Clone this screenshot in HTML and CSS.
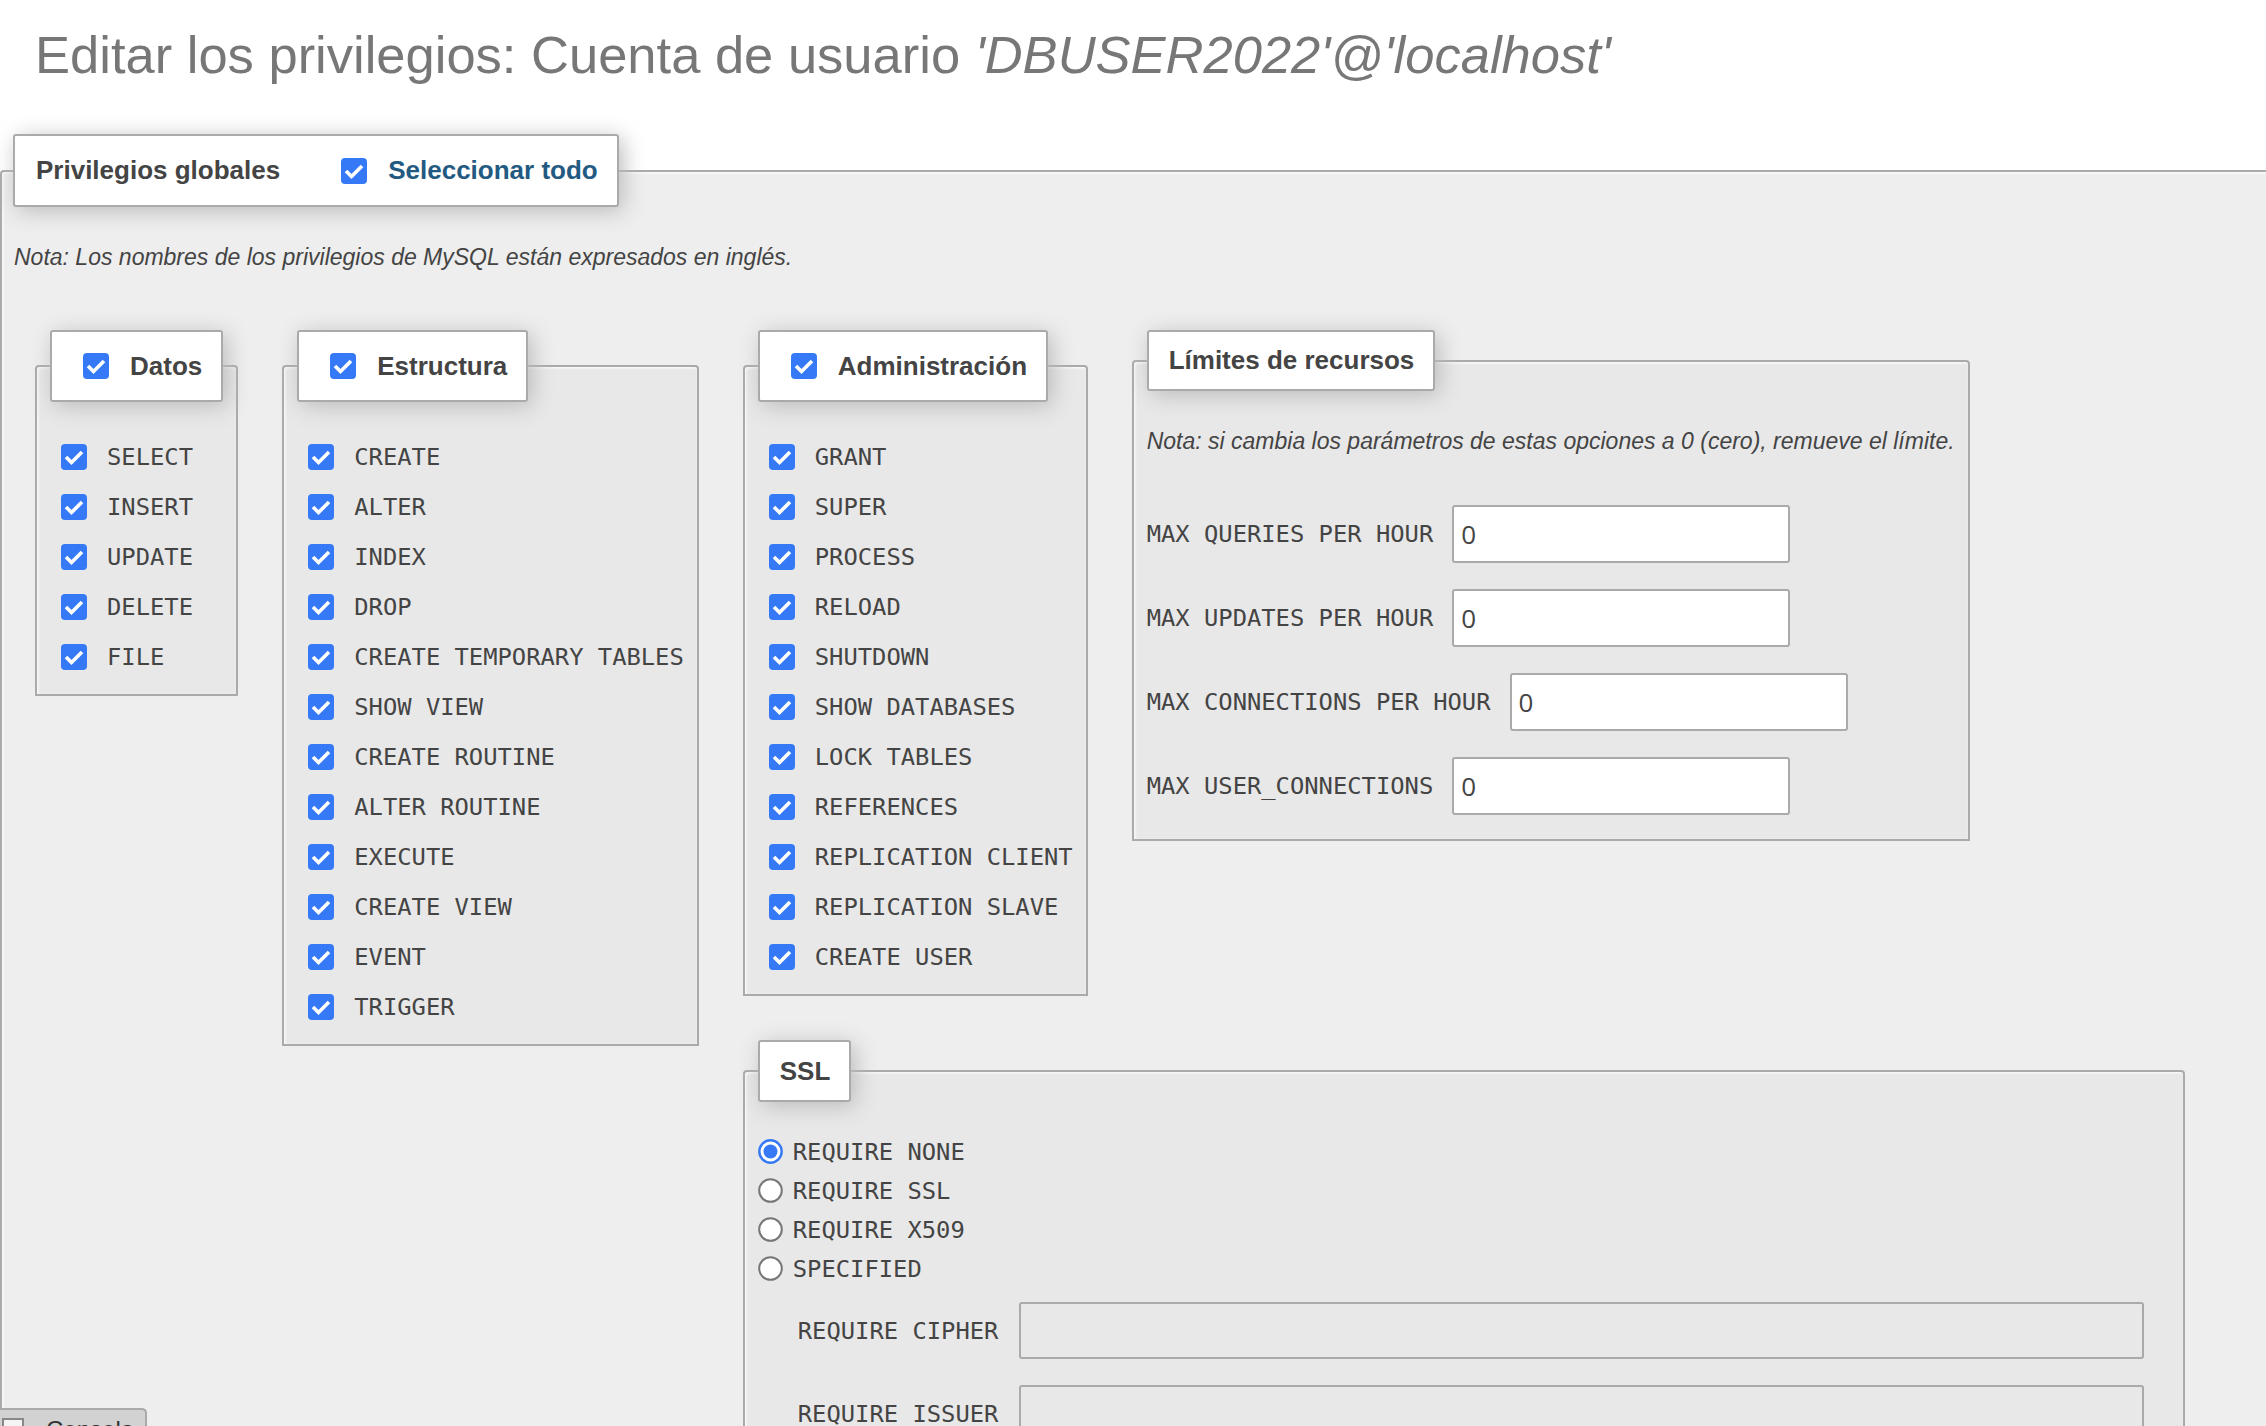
FILE: index.html
```html
<!DOCTYPE html>
<html lang="es">
<head>
<meta charset="utf-8">
<title>Editar los privilegios</title>
<link rel="stylesheet" href="styles.css">
</head>
<body>
<svg class="sprite" aria-hidden="true">
  <symbol id="i-check" viewBox="0 0 26 26">
    <rect x="0" y="0" width="26" height="26" rx="4" fill="#3579f6"/>
    <path d="M5 13 L10.5 18.5 L21 8" fill="none" stroke="#fff" stroke-width="3.6"/>
  </symbol>
  <symbol id="i-radio-on" viewBox="0 0 25 25">
    <circle cx="12.5" cy="12.5" r="11.2" fill="#fff" stroke="#3579f6" stroke-width="2.4"/>
    <circle cx="12.5" cy="12.5" r="7" fill="#3579f6"/>
  </symbol>
  <symbol id="i-radio-off" viewBox="0 0 25 25">
    <circle cx="12.5" cy="12.5" r="11.3" fill="#fff" stroke="#767676" stroke-width="2"/>
  </symbol>
</svg>

<h2 class="page-title">Editar los privilegios: Cuenta de usuario <span class="who">'DBUSER2022'@'localhost'</span></h2>

<fieldset class="outer">
  <legend class="lg lg-global"><div class="lg-in">
    <span>Privilegios globales</span>
    <svg class="cb"><use href="#i-check"/></svg>
    <span class="select-all">Seleccionar todo</span>
  </div></legend>

  <p class="note">Nota: Los nombres de los privilegios de MySQL están expresados en inglés.</p>

  <div class="groups">
    <fieldset class="grp">
      <legend class="lg"><div class="lg-in with-cb"><svg class="cb"><use href="#i-check"/></svg><span>Datos</span></div></legend>
      <div class="items">
        <div class="item"><svg class="cb"><use href="#i-check"/></svg><span>SELECT</span></div>
        <div class="item"><svg class="cb"><use href="#i-check"/></svg><span>INSERT</span></div>
        <div class="item"><svg class="cb"><use href="#i-check"/></svg><span>UPDATE</span></div>
        <div class="item"><svg class="cb"><use href="#i-check"/></svg><span>DELETE</span></div>
        <div class="item"><svg class="cb"><use href="#i-check"/></svg><span>FILE</span></div>
      </div>
    </fieldset>

    <fieldset class="grp">
      <legend class="lg"><div class="lg-in with-cb"><svg class="cb"><use href="#i-check"/></svg><span>Estructura</span></div></legend>
      <div class="items">
        <div class="item"><svg class="cb"><use href="#i-check"/></svg><span>CREATE</span></div>
        <div class="item"><svg class="cb"><use href="#i-check"/></svg><span>ALTER</span></div>
        <div class="item"><svg class="cb"><use href="#i-check"/></svg><span>INDEX</span></div>
        <div class="item"><svg class="cb"><use href="#i-check"/></svg><span>DROP</span></div>
        <div class="item"><svg class="cb"><use href="#i-check"/></svg><span>CREATE TEMPORARY TABLES</span></div>
        <div class="item"><svg class="cb"><use href="#i-check"/></svg><span>SHOW VIEW</span></div>
        <div class="item"><svg class="cb"><use href="#i-check"/></svg><span>CREATE ROUTINE</span></div>
        <div class="item"><svg class="cb"><use href="#i-check"/></svg><span>ALTER ROUTINE</span></div>
        <div class="item"><svg class="cb"><use href="#i-check"/></svg><span>EXECUTE</span></div>
        <div class="item"><svg class="cb"><use href="#i-check"/></svg><span>CREATE VIEW</span></div>
        <div class="item"><svg class="cb"><use href="#i-check"/></svg><span>EVENT</span></div>
        <div class="item"><svg class="cb"><use href="#i-check"/></svg><span>TRIGGER</span></div>
      </div>
    </fieldset>

    <div class="right-col">
      <div class="right-top">
        <fieldset class="grp">
          <legend class="lg"><div class="lg-in with-cb"><svg class="cb"><use href="#i-check"/></svg><span>Administración</span></div></legend>
          <div class="items">
            <div class="item"><svg class="cb"><use href="#i-check"/></svg><span>GRANT</span></div>
            <div class="item"><svg class="cb"><use href="#i-check"/></svg><span>SUPER</span></div>
            <div class="item"><svg class="cb"><use href="#i-check"/></svg><span>PROCESS</span></div>
            <div class="item"><svg class="cb"><use href="#i-check"/></svg><span>RELOAD</span></div>
            <div class="item"><svg class="cb"><use href="#i-check"/></svg><span>SHUTDOWN</span></div>
            <div class="item"><svg class="cb"><use href="#i-check"/></svg><span>SHOW DATABASES</span></div>
            <div class="item"><svg class="cb"><use href="#i-check"/></svg><span>LOCK TABLES</span></div>
            <div class="item"><svg class="cb"><use href="#i-check"/></svg><span>REFERENCES</span></div>
            <div class="item"><svg class="cb"><use href="#i-check"/></svg><span>REPLICATION CLIENT</span></div>
            <div class="item"><svg class="cb"><use href="#i-check"/></svg><span>REPLICATION SLAVE</span></div>
            <div class="item"><svg class="cb"><use href="#i-check"/></svg><span>CREATE USER</span></div>
          </div>
        </fieldset>

        <fieldset class="grp limits">
          <legend class="lg"><div class="lg-in"><span>Límites de recursos</span></div></legend>
          <p class="note">Nota: si cambia los parámetros de estas opciones a 0 (cero), remueve el límite.</p>
          <div class="limit-rows">
            <div class="limit-row"><label>MAX QUERIES PER HOUR</label><input class="txt" type="text" value="0"></div>
            <div class="limit-row"><label>MAX UPDATES PER HOUR</label><input class="txt" type="text" value="0"></div>
            <div class="limit-row"><label>MAX CONNECTIONS PER HOUR</label><input class="txt" type="text" value="0"></div>
            <div class="limit-row"><label>MAX USER_CONNECTIONS</label><input class="txt" type="text" value="0"></div>
          </div>
        </fieldset>
      </div>

      <fieldset class="grp ssl">
        <legend class="lg"><div class="lg-in ssl-in"><span>SSL</span></div></legend>
        <div class="radios">
          <div class="radio-row"><svg class="rd"><use href="#i-radio-on"/></svg><span>REQUIRE NONE</span></div>
          <div class="radio-row"><svg class="rd"><use href="#i-radio-off"/></svg><span>REQUIRE SSL</span></div>
          <div class="radio-row"><svg class="rd"><use href="#i-radio-off"/></svg><span>REQUIRE X509</span></div>
          <div class="radio-row"><svg class="rd"><use href="#i-radio-off"/></svg><span>SPECIFIED</span></div>
        </div>
        <div class="ssl-rows">
          <div class="ssl-row"><label>REQUIRE CIPHER</label><input class="txt wide" type="text" disabled></div>
          <div class="ssl-row"><label>REQUIRE ISSUER</label><input class="txt wide" type="text" disabled></div>
          <div class="ssl-row"><label>REQUIRE SUBJECT</label><input class="txt wide" type="text" disabled></div>
        </div>
      </fieldset>
    </div>
  </div>
</fieldset>

<div class="console">
  <span class="console-icon"></span>
  <span class="console-text">Consola</span>
</div>
</body>
</html>
```

FILE: styles.css
```css
* {
  box-sizing: border-box;
}

html,
body {
  margin: 0;
  padding: 0;
  overflow: hidden;
  background: #fff;
}

body {
  width: 2266px;
  height: 1426px;
  font-family: "Liberation Sans", Arial, sans-serif;
  color: #444;
}

.sprite {
  position: absolute;
  width: 0;
  height: 0;
  overflow: hidden;
}

.page-title {
  margin: 0;
  padding: 25px 0 0 35px;
  font-size: 52.5px;
  line-height: 60px;
  font-weight: normal;
  color: #777;
  white-space: nowrap;
}

.page-title .who {
  font-style: italic;
}

.outer {
  margin: 49px 0 0 0;
  width: 2320px;
  min-width: 0;
  padding: 0 11px;
  border: 2px solid #aaa;
  border-radius: 4px 4px 0 0;
  background: #eee;
  box-shadow: inset 1px 1px 3px #fff;
}

legend.lg {
  padding: 0 19px 0 20px;
  border: 2px solid #aaa;
  border-radius: 3px;
  background: #fff;
  box-shadow: 4px 4px 22px #bbb;
  font-weight: bold;
  font-size: 26px;
  color: #444;
}

.lg-in {
  display: flex;
  align-items: center;
  height: 57px;
  white-space: nowrap;
}

.lg-in.with-cb {
  height: 68px;
}

.lg-in.ssl-in {
  height: 58px;
}

.lg .cb {
  margin: 0 21px 0 11px;
}

.lg-global {
  padding-left: 21px !important;
}

.lg-global .lg-in {
  height: 69px;
}

.lg-global .cb {
  margin: 0 21px 0 61px;
}

.select-all {
  color: #235a81;
}

.cb {
  display: block;
  flex: none;
  width: 26px;
  height: 26px;
}

.rd {
  display: block;
  flex: none;
  width: 25px;
  height: 25px;
}

.note {
  margin: 37px 0 0 1px;
  font-style: italic;
  font-size: 23px;
  line-height: 26px;
  color: #444;
  white-space: nowrap;
}

.groups {
  display: flex;
  align-items: flex-start;
  margin-top: 38px;
}

.grp {
  flex: none;
  min-width: 0;
  margin: 22px;
  padding: 0 13px 12px;
  border: 2px solid #aaa;
  border-radius: 4px 4px 0 0;
  background: #e8e8e8;
  box-shadow: inset 1px 1px 3px #fff;
}

.grp .note {
  margin-left: 0;
}

.items {
  padding-top: 30px;
}

.item {
  display: flex;
  align-items: center;
  gap: 20px;
  height: 50px;
  padding-left: 11px;
  font-family: "DejaVu Sans Mono", monospace;
  font-size: 23.8px;
  color: #444;
  white-space: nowrap;
}

.right-col {
  display: flex;
  flex-direction: column;
  align-items: flex-start;
  flex: none;
}

.right-top {
  display: flex;
  align-items: flex-start;
}

.limits {
  padding-bottom: 24px;
}

.limit-rows {
  padding-top: 25px;
}

.limit-row,
.ssl-row {
  display: flex;
  align-items: center;
  height: 58px;
  margin-top: 26px;
  font-family: "DejaVu Sans Mono", monospace;
  font-size: 23.8px;
  color: #444;
  white-space: nowrap;
}

.txt {
  width: 338px;
  height: 58px;
  margin: 0 0 0 19px;
  padding: 0 7px;
  border: 2px solid #aaa;
  border-radius: 3px;
  background: #fff;
  font-family: "Open Sans", "Liberation Sans", sans-serif;
  font-size: 26px;
  color: #444;
  outline: none;
}

.ssl {
  width: 1442px;
}

.radios {
  padding-top: 30px;
}

.radio-row {
  display: flex;
  align-items: center;
  gap: 10px;
  height: 39px;
  font-family: "DejaVu Sans Mono", monospace;
  font-size: 23.8px;
  color: #444;
  white-space: nowrap;
}

.ssl-rows .ssl-row {
  height: 57px;
  padding-left: 40px;
}

.ssl-rows .ssl-row:first-child {
  margin-top: 14px;
}

.ssl-row label {
  width: 202px;
  flex: none;
}

.txt.wide {
  width: 1125px;
  height: 57px;
  background: transparent;
}

.console {
  position: fixed;
  left: 0;
  bottom: 0;
  width: 147px;
  height: 18px;
  overflow: hidden;
  background: #d2d2d2;
  border-top: 2px solid #aaa;
  border-right: 2px solid #aaa;
  border-radius: 0 5px 0 0;
  display: flex;
  align-items: flex-start;
  padding-top: 8px;
}

.console-icon {
  display: block;
  width: 22px;
  height: 22px;
  margin-left: 2px;
  background: #f4f4f4;
  border: 2px solid #888;
}

.console-text {
  margin: -2px 0 0 22px;
  font-size: 24px;
  line-height: 28px;
  color: #333;
}
```
